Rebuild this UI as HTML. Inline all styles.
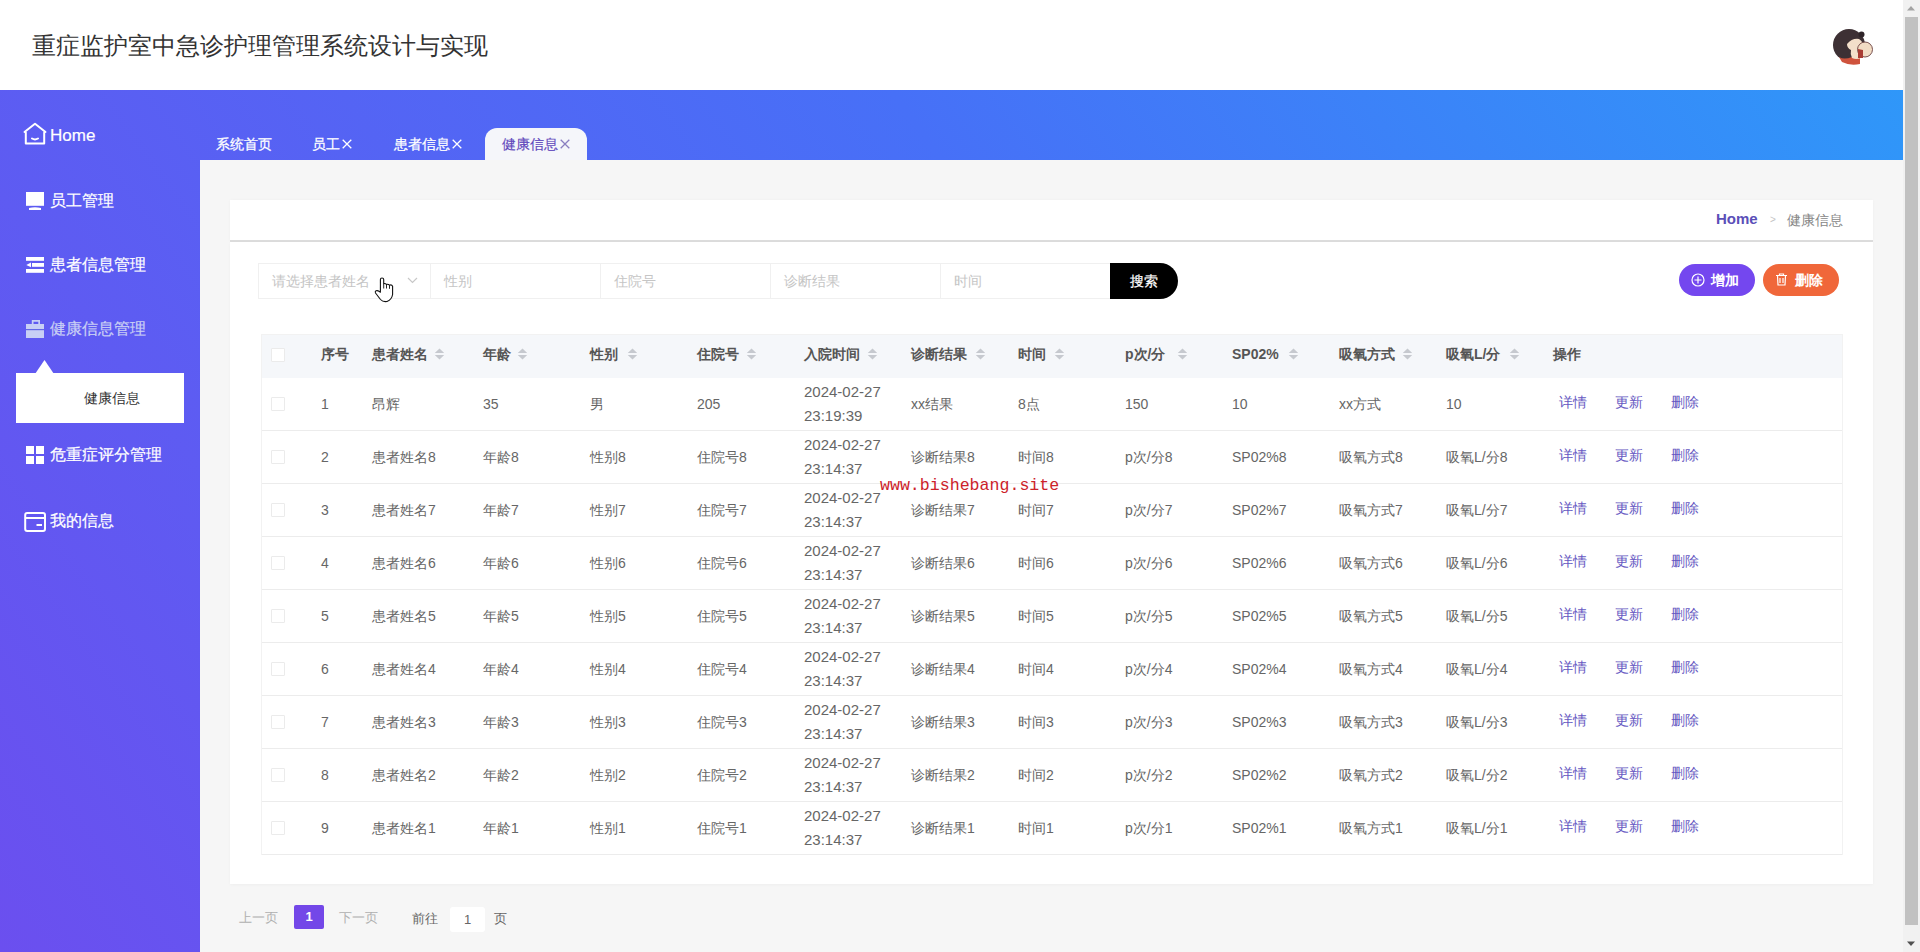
<!DOCTYPE html>
<html><head><meta charset="utf-8">
<style>
*{box-sizing:border-box;margin:0;padding:0}
html,body{width:1920px;height:952px;overflow:hidden;background:#fff;font-family:"Liberation Sans",sans-serif}
.abs{position:absolute}
#header{position:absolute;left:0;top:0;width:1903px;height:90px;background:#fff}
#title{position:absolute;left:32px;top:29px;font-size:24px;line-height:32px;color:#333;white-space:nowrap}
#grad{position:absolute;left:0;top:90px;width:1903px;height:862px;background:linear-gradient(54deg,#6b4fef 0%,#4770f7 60%,#2f97f9 100%)}
#content{position:absolute;left:200px;top:160px;width:1703px;height:792px;background:#f6f6f6}
.menu{position:absolute;left:50px;color:#fff;font-size:16px;line-height:20px;white-space:nowrap;-webkit-text-stroke:0.2px currentColor}
.micon{position:absolute}
.tab{position:absolute;top:135px;font-size:14px;line-height:18px;color:#fff;white-space:nowrap;-webkit-text-stroke:0.25px currentColor}
#sb{position:absolute;left:1903px;top:0;width:17px;height:952px;background:#f1f1f1}
#thumb{position:absolute;left:1905px;top:17px;width:13px;height:908px;background:#c1c1c1}
.card{position:absolute;background:#fff}
.inp{position:absolute;top:263px;height:36px;border:1px solid #f0f0f0;border-right:none;background:#fff;font-size:14px;color:#c5c5c5;line-height:34px;padding-left:13px;white-space:nowrap}
.btn{position:absolute;top:264px;height:32px;border-radius:16px;color:#fff;font-size:14px;font-weight:bold;line-height:32px;white-space:nowrap}
.th,.td{position:absolute;white-space:nowrap;font-size:14px}
.th{color:#555;font-weight:bold;top:345px;line-height:18px}
.td{color:#666}
.sort{position:absolute;width:10px;height:12px}
.hline{position:absolute;left:262px;width:1580px;height:1px;background:#ececec}
.cb{position:absolute;width:14px;height:14px;border:1px solid #ebebeb;border-radius:1px;background:#fff}
.op{position:absolute;font-size:14px;color:#6658c2;white-space:nowrap}
</style></head><body>
<div id="header">
  <div id="title" style="top:30px">重症监护室中急诊护理管理系统设计与实现</div>
  <svg class="abs" style="left:1828px;top:22px" width="50" height="50" viewBox="0 0 50 50">
    <circle cx="21" cy="23" r="16" fill="#3d3034"/>
    <circle cx="33.5" cy="12.5" r="3" fill="#2e2428"/>
    <path d="M11 35 Q16 38 24 35 L32 35 L32 42 Q22 44 14 40Z" fill="#cf533d"/>
    <path d="M19 22 Q24 16 31 17 Q36 20 35 26 L33 36 Q28 38 24 36 Q22 32 23 28 Q19 26 19 22Z" fill="#f3dfca"/>
    <circle cx="37" cy="27.5" r="7.5" fill="#f2dcc4" stroke="#6a4040" stroke-width="0.9"/>
    <path d="M30 27 L35 28 L35 36 L30 36Z" fill="#a93c33"/>
  </svg>
</div>
<div id="grad"></div>
<div id="content"></div>

<!-- sidebar -->
<svg class="micon" style="left:23px;top:122px" width="24" height="24" viewBox="0 0 24 24" fill="none" stroke="#fff" stroke-width="2" stroke-linejoin="round" stroke-linecap="round">
  <path d="M1.5 10 L12 1.8 L22.5 10"/><path d="M2.8 10.5 V21.5 H21.2 V10.5"/><path d="M9 16.5 Q12 18.3 15 16.5"/>
</svg>
<div class="menu" style="top:126px;font-size:17px;line-height:20px;-webkit-text-stroke:0.2px #fff">Home</div>

<svg class="micon" style="left:26px;top:192px" width="18" height="19" viewBox="0 0 18 19">
  <rect x="0" y="0" width="18" height="13.8" fill="#fff"/><path d="M3 16 Q9 14.5 15 16 V18 H3Z" fill="#fff"/>
</svg>
<div class="menu" style="top:191px">员工管理</div>

<svg class="micon" style="left:26px;top:257px" width="18" height="16" viewBox="0 0 18 16">
  <rect x="0" y="0" width="18" height="3.8" fill="#fff"/><rect x="6" y="6" width="12" height="3.8" fill="#fff"/><rect x="0" y="12" width="18" height="3.8" fill="#fff"/><path d="M0.3 7.9 L5 5.6 V10.2Z" fill="#fff"/>
</svg>
<div class="menu" style="top:255px">患者信息管理</div>

<svg class="micon" style="left:26px;top:320px" width="18" height="18" viewBox="0 0 18 18">
  <path d="M5.8 0 H14 V4 H18 V18 H0 V4 H5.8Z M7.5 1.8 V4 H12.3 V1.8Z" fill="#c8cff5" fill-rule="evenodd"/><rect x="0" y="9" width="18" height="1.2" fill="#6468e6"/>
</svg>
<div class="menu" style="top:319px;color:#c9cff5">健康信息管理</div>

<div class="abs" style="left:16px;top:373px;width:168px;height:50px;background:#fff"></div>
<svg class="abs" style="left:35px;top:360px" width="19" height="14" viewBox="0 0 19 14"><path d="M0 14 L9.5 0 L19 14Z" fill="#fff"/></svg>
<div class="abs" style="left:84px;top:389px;font-size:14px;line-height:18px;color:#333;white-space:nowrap">健康信息</div>

<svg class="micon" style="left:26px;top:446px" width="18" height="18" viewBox="0 0 18 18">
  <rect x="0" y="0" width="8" height="8" fill="#fff"/><rect x="10" y="0" width="8" height="8" fill="#fff"/><rect x="0" y="10" width="8" height="8" fill="#fff"/><rect x="10" y="10" width="8" height="8" fill="#fff"/>
</svg>
<div class="menu" style="top:445px">危重症评分管理</div>

<svg class="micon" style="left:24px;top:512px" width="22" height="20" viewBox="0 0 22 20" fill="none" stroke="#fff" stroke-width="2">
  <rect x="1.2" y="1" width="19.8" height="18" rx="2"/><line x1="1" y1="6" x2="21" y2="6"/><line x1="12.5" y1="13" x2="18" y2="13"/>
</svg>
<div class="menu" style="top:511px">我的信息</div>

<!-- tabs -->
<div class="tab" style="left:216px">系统首页</div>
<div class="tab" style="left:312px">员工<svg width="10" height="10" viewBox="0 0 10 10" style="margin-left:2px;vertical-align:0px"><path d="M0.7 0.7 L9.3 9.3 M9.3 0.7 L0.7 9.3" stroke="#fff" stroke-width="1.3"/></svg></div>
<div class="tab" style="left:394px">患者信息<svg width="10" height="10" viewBox="0 0 10 10" style="margin-left:2px;vertical-align:0px"><path d="M0.7 0.7 L9.3 9.3 M9.3 0.7 L0.7 9.3" stroke="#fff" stroke-width="1.3"/></svg></div>
<div class="abs" style="left:485px;top:128px;width:102px;height:32px;background:#f5f6fa;border-radius:12px 12px 0 0"></div>
<div class="tab" style="left:502px;color:#6249bd;-webkit-text-stroke:0.15px #6249bd">健康信息<svg width="10" height="10" viewBox="0 0 10 10" style="margin-left:2px;vertical-align:0px"><path d="M0.7 0.7 L9.3 9.3 M9.3 0.7 L0.7 9.3" stroke="#8a7fc0" stroke-width="1.3"/></svg></div>

<!-- breadcrumb card -->
<div class="card" style="box-shadow:0 0 3px rgba(0,0,0,0.03);left:230px;top:200px;width:1643px;height:42px;border-bottom:2px solid #dcdcdc"></div>
<div class="abs" style="left:1716px;top:210px;font-size:15px;line-height:18px;font-weight:bold;color:#5b4fb8">Home</div>
<div class="abs" style="left:1770px;top:211px;font-size:10px;line-height:18px;color:#c4c4c4">&gt;</div>
<div class="abs" style="left:1787px;top:211px;font-size:14px;line-height:18px;color:#888">健康信息</div>

<!-- main card -->
<div class="card" style="box-shadow:0 1px 3px rgba(0,0,0,0.03);left:230px;top:242px;width:1643px;height:642px"></div>

<div class="inp" style="left:258px;width:172px">请选择患者姓名</div>
<svg class="abs" style="left:407px;top:277px" width="11" height="7" viewBox="0 0 11 7"><path d="M1 1 L5.5 5.5 L10 1" fill="none" stroke="#c8c8c8" stroke-width="1.2"/></svg>
<div class="inp" style="left:430px;width:170px">性别</div>
<div class="inp" style="left:600px;width:170px">住院号</div>
<div class="inp" style="left:770px;width:170px">诊断结果</div>
<div class="inp" style="left:940px;width:170px">时间</div>
<div class="abs" style="left:1110px;top:263px;width:68px;height:36px;background:#000;border-radius:0 18px 18px 0;color:#fff;font-size:14px;line-height:36px;padding-left:20px;-webkit-text-stroke:0.2px #fff">搜索</div>

<div class="btn" style="left:1679px;width:76px;background:#7447ef;padding-left:32px">增加</div>
<svg class="abs" style="left:1691px;top:273px" width="14" height="14" viewBox="0 0 14 14" fill="none" stroke="#fff" stroke-width="1.2"><circle cx="7" cy="7" r="6"/><path d="M7 3.5 V10.5 M3.5 7 H10.5"/></svg>
<div class="btn" style="left:1763px;width:76px;background:#f0673a;padding-left:32px">删除</div>
<svg class="abs" style="left:1775px;top:273px" width="13" height="13" viewBox="0 0 13 13" fill="none" stroke="#fff" stroke-width="1.2"><path d="M1 2.5 H12 M4.5 2.5 V1 H8.5 V2.5 M2.5 2.5 L3 12 H10 L10.5 2.5 M5 5 V10 M8 5 V10"/></svg>

<!-- table -->
<div class="abs" style="left:261px;top:334px;width:1582px;height:521px;border:1px solid #f2f2f2;background:#fff"></div>
<div class="abs" style="left:262px;top:335px;width:1580px;height:43px;background:#f5f7fa"></div>
<div class="cb" style="left:271px;top:348px"></div>
<div class="th" style="left:321px">序号</div>
<div class="th" style="left:372px">患者姓名</div>
<div class="th" style="left:483px">年龄</div>
<div class="th" style="left:590px">性别</div>
<div class="th" style="left:697px">住院号</div>
<div class="th" style="left:804px">入院时间</div>
<div class="th" style="left:911px">诊断结果</div>
<div class="th" style="left:1018px">时间</div>
<div class="th" style="left:1125px">p次/分</div>
<div class="th" style="left:1232px">SP02%</div>
<div class="th" style="left:1339px">吸氧方式</div>
<div class="th" style="left:1446px">吸氧L/分</div>
<div class="th" style="left:1553px">操作</div>
<svg class="sort" style="left:434px;top:348px;width:11px;height:12px" viewBox="0 0 11 12"><path d="M0.8 5 L5.5 0.6 L10.2 5Z M0.8 7 L5.5 11.4 L10.2 7Z" fill="#c6c9cf"/></svg>
<svg class="sort" style="left:517px;top:348px;width:11px;height:12px" viewBox="0 0 11 12"><path d="M0.8 5 L5.5 0.6 L10.2 5Z M0.8 7 L5.5 11.4 L10.2 7Z" fill="#c6c9cf"/></svg>
<svg class="sort" style="left:627px;top:348px;width:11px;height:12px" viewBox="0 0 11 12"><path d="M0.8 5 L5.5 0.6 L10.2 5Z M0.8 7 L5.5 11.4 L10.2 7Z" fill="#c6c9cf"/></svg>
<svg class="sort" style="left:746px;top:348px;width:11px;height:12px" viewBox="0 0 11 12"><path d="M0.8 5 L5.5 0.6 L10.2 5Z M0.8 7 L5.5 11.4 L10.2 7Z" fill="#c6c9cf"/></svg>
<svg class="sort" style="left:867px;top:348px;width:11px;height:12px" viewBox="0 0 11 12"><path d="M0.8 5 L5.5 0.6 L10.2 5Z M0.8 7 L5.5 11.4 L10.2 7Z" fill="#c6c9cf"/></svg>
<svg class="sort" style="left:975px;top:348px;width:11px;height:12px" viewBox="0 0 11 12"><path d="M0.8 5 L5.5 0.6 L10.2 5Z M0.8 7 L5.5 11.4 L10.2 7Z" fill="#c6c9cf"/></svg>
<svg class="sort" style="left:1054px;top:348px;width:11px;height:12px" viewBox="0 0 11 12"><path d="M0.8 5 L5.5 0.6 L10.2 5Z M0.8 7 L5.5 11.4 L10.2 7Z" fill="#c6c9cf"/></svg>
<svg class="sort" style="left:1177px;top:348px;width:11px;height:12px" viewBox="0 0 11 12"><path d="M0.8 5 L5.5 0.6 L10.2 5Z M0.8 7 L5.5 11.4 L10.2 7Z" fill="#c6c9cf"/></svg>
<svg class="sort" style="left:1288px;top:348px;width:11px;height:12px" viewBox="0 0 11 12"><path d="M0.8 5 L5.5 0.6 L10.2 5Z M0.8 7 L5.5 11.4 L10.2 7Z" fill="#c6c9cf"/></svg>
<svg class="sort" style="left:1402px;top:348px;width:11px;height:12px" viewBox="0 0 11 12"><path d="M0.8 5 L5.5 0.6 L10.2 5Z M0.8 7 L5.5 11.4 L10.2 7Z" fill="#c6c9cf"/></svg>
<svg class="sort" style="left:1509px;top:348px;width:11px;height:12px" viewBox="0 0 11 12"><path d="M0.8 5 L5.5 0.6 L10.2 5Z M0.8 7 L5.5 11.4 L10.2 7Z" fill="#c6c9cf"/></svg>

<div class="cb" style="left:271px;top:397px"></div>
<div class="td" style="left:321px;top:394px;line-height:20px">1</div>
<div class="td" style="left:372px;top:394px;line-height:20px">昂辉</div>
<div class="td" style="left:483px;top:394px;line-height:20px">35</div>
<div class="td" style="left:590px;top:394px;line-height:20px">男</div>
<div class="td" style="left:697px;top:394px;line-height:20px">205</div>
<div class="td" style="left:804px;top:380px;line-height:24px;font-size:15px">2024-02-27<br>23:19:39</div>
<div class="td" style="left:911px;top:394px;line-height:20px">xx结果</div>
<div class="td" style="left:1018px;top:394px;line-height:20px">8点</div>
<div class="td" style="left:1125px;top:394px;line-height:20px">150</div>
<div class="td" style="left:1232px;top:394px;line-height:20px">10</div>
<div class="td" style="left:1339px;top:394px;line-height:20px">xx方式</div>
<div class="td" style="left:1446px;top:394px;line-height:20px">10</div>
<div class="op" style="left:1559px;top:392px;line-height:20px">详情</div>
<div class="op" style="left:1615px;top:392px;line-height:20px">更新</div>
<div class="op" style="left:1671px;top:392px;line-height:20px">删除</div>
<div class="hline" style="top:430px"></div>
<div class="cb" style="left:271px;top:450px"></div>
<div class="td" style="left:321px;top:447px;line-height:20px">2</div>
<div class="td" style="left:372px;top:447px;line-height:20px">患者姓名8</div>
<div class="td" style="left:483px;top:447px;line-height:20px">年龄8</div>
<div class="td" style="left:590px;top:447px;line-height:20px">性别8</div>
<div class="td" style="left:697px;top:447px;line-height:20px">住院号8</div>
<div class="td" style="left:804px;top:433px;line-height:24px;font-size:15px">2024-02-27<br>23:14:37</div>
<div class="td" style="left:911px;top:447px;line-height:20px">诊断结果8</div>
<div class="td" style="left:1018px;top:447px;line-height:20px">时间8</div>
<div class="td" style="left:1125px;top:447px;line-height:20px">p次/分8</div>
<div class="td" style="left:1232px;top:447px;line-height:20px">SP02%8</div>
<div class="td" style="left:1339px;top:447px;line-height:20px">吸氧方式8</div>
<div class="td" style="left:1446px;top:447px;line-height:20px">吸氧L/分8</div>
<div class="op" style="left:1559px;top:445px;line-height:20px">详情</div>
<div class="op" style="left:1615px;top:445px;line-height:20px">更新</div>
<div class="op" style="left:1671px;top:445px;line-height:20px">删除</div>
<div class="hline" style="top:483px"></div>
<div class="cb" style="left:271px;top:503px"></div>
<div class="td" style="left:321px;top:500px;line-height:20px">3</div>
<div class="td" style="left:372px;top:500px;line-height:20px">患者姓名7</div>
<div class="td" style="left:483px;top:500px;line-height:20px">年龄7</div>
<div class="td" style="left:590px;top:500px;line-height:20px">性别7</div>
<div class="td" style="left:697px;top:500px;line-height:20px">住院号7</div>
<div class="td" style="left:804px;top:486px;line-height:24px;font-size:15px">2024-02-27<br>23:14:37</div>
<div class="td" style="left:911px;top:500px;line-height:20px">诊断结果7</div>
<div class="td" style="left:1018px;top:500px;line-height:20px">时间7</div>
<div class="td" style="left:1125px;top:500px;line-height:20px">p次/分7</div>
<div class="td" style="left:1232px;top:500px;line-height:20px">SP02%7</div>
<div class="td" style="left:1339px;top:500px;line-height:20px">吸氧方式7</div>
<div class="td" style="left:1446px;top:500px;line-height:20px">吸氧L/分7</div>
<div class="op" style="left:1559px;top:498px;line-height:20px">详情</div>
<div class="op" style="left:1615px;top:498px;line-height:20px">更新</div>
<div class="op" style="left:1671px;top:498px;line-height:20px">删除</div>
<div class="hline" style="top:536px"></div>
<div class="cb" style="left:271px;top:556px"></div>
<div class="td" style="left:321px;top:553px;line-height:20px">4</div>
<div class="td" style="left:372px;top:553px;line-height:20px">患者姓名6</div>
<div class="td" style="left:483px;top:553px;line-height:20px">年龄6</div>
<div class="td" style="left:590px;top:553px;line-height:20px">性别6</div>
<div class="td" style="left:697px;top:553px;line-height:20px">住院号6</div>
<div class="td" style="left:804px;top:539px;line-height:24px;font-size:15px">2024-02-27<br>23:14:37</div>
<div class="td" style="left:911px;top:553px;line-height:20px">诊断结果6</div>
<div class="td" style="left:1018px;top:553px;line-height:20px">时间6</div>
<div class="td" style="left:1125px;top:553px;line-height:20px">p次/分6</div>
<div class="td" style="left:1232px;top:553px;line-height:20px">SP02%6</div>
<div class="td" style="left:1339px;top:553px;line-height:20px">吸氧方式6</div>
<div class="td" style="left:1446px;top:553px;line-height:20px">吸氧L/分6</div>
<div class="op" style="left:1559px;top:551px;line-height:20px">详情</div>
<div class="op" style="left:1615px;top:551px;line-height:20px">更新</div>
<div class="op" style="left:1671px;top:551px;line-height:20px">删除</div>
<div class="hline" style="top:589px"></div>
<div class="cb" style="left:271px;top:609px"></div>
<div class="td" style="left:321px;top:606px;line-height:20px">5</div>
<div class="td" style="left:372px;top:606px;line-height:20px">患者姓名5</div>
<div class="td" style="left:483px;top:606px;line-height:20px">年龄5</div>
<div class="td" style="left:590px;top:606px;line-height:20px">性别5</div>
<div class="td" style="left:697px;top:606px;line-height:20px">住院号5</div>
<div class="td" style="left:804px;top:592px;line-height:24px;font-size:15px">2024-02-27<br>23:14:37</div>
<div class="td" style="left:911px;top:606px;line-height:20px">诊断结果5</div>
<div class="td" style="left:1018px;top:606px;line-height:20px">时间5</div>
<div class="td" style="left:1125px;top:606px;line-height:20px">p次/分5</div>
<div class="td" style="left:1232px;top:606px;line-height:20px">SP02%5</div>
<div class="td" style="left:1339px;top:606px;line-height:20px">吸氧方式5</div>
<div class="td" style="left:1446px;top:606px;line-height:20px">吸氧L/分5</div>
<div class="op" style="left:1559px;top:604px;line-height:20px">详情</div>
<div class="op" style="left:1615px;top:604px;line-height:20px">更新</div>
<div class="op" style="left:1671px;top:604px;line-height:20px">删除</div>
<div class="hline" style="top:642px"></div>
<div class="cb" style="left:271px;top:662px"></div>
<div class="td" style="left:321px;top:659px;line-height:20px">6</div>
<div class="td" style="left:372px;top:659px;line-height:20px">患者姓名4</div>
<div class="td" style="left:483px;top:659px;line-height:20px">年龄4</div>
<div class="td" style="left:590px;top:659px;line-height:20px">性别4</div>
<div class="td" style="left:697px;top:659px;line-height:20px">住院号4</div>
<div class="td" style="left:804px;top:645px;line-height:24px;font-size:15px">2024-02-27<br>23:14:37</div>
<div class="td" style="left:911px;top:659px;line-height:20px">诊断结果4</div>
<div class="td" style="left:1018px;top:659px;line-height:20px">时间4</div>
<div class="td" style="left:1125px;top:659px;line-height:20px">p次/分4</div>
<div class="td" style="left:1232px;top:659px;line-height:20px">SP02%4</div>
<div class="td" style="left:1339px;top:659px;line-height:20px">吸氧方式4</div>
<div class="td" style="left:1446px;top:659px;line-height:20px">吸氧L/分4</div>
<div class="op" style="left:1559px;top:657px;line-height:20px">详情</div>
<div class="op" style="left:1615px;top:657px;line-height:20px">更新</div>
<div class="op" style="left:1671px;top:657px;line-height:20px">删除</div>
<div class="hline" style="top:695px"></div>
<div class="cb" style="left:271px;top:715px"></div>
<div class="td" style="left:321px;top:712px;line-height:20px">7</div>
<div class="td" style="left:372px;top:712px;line-height:20px">患者姓名3</div>
<div class="td" style="left:483px;top:712px;line-height:20px">年龄3</div>
<div class="td" style="left:590px;top:712px;line-height:20px">性别3</div>
<div class="td" style="left:697px;top:712px;line-height:20px">住院号3</div>
<div class="td" style="left:804px;top:698px;line-height:24px;font-size:15px">2024-02-27<br>23:14:37</div>
<div class="td" style="left:911px;top:712px;line-height:20px">诊断结果3</div>
<div class="td" style="left:1018px;top:712px;line-height:20px">时间3</div>
<div class="td" style="left:1125px;top:712px;line-height:20px">p次/分3</div>
<div class="td" style="left:1232px;top:712px;line-height:20px">SP02%3</div>
<div class="td" style="left:1339px;top:712px;line-height:20px">吸氧方式3</div>
<div class="td" style="left:1446px;top:712px;line-height:20px">吸氧L/分3</div>
<div class="op" style="left:1559px;top:710px;line-height:20px">详情</div>
<div class="op" style="left:1615px;top:710px;line-height:20px">更新</div>
<div class="op" style="left:1671px;top:710px;line-height:20px">删除</div>
<div class="hline" style="top:748px"></div>
<div class="cb" style="left:271px;top:768px"></div>
<div class="td" style="left:321px;top:765px;line-height:20px">8</div>
<div class="td" style="left:372px;top:765px;line-height:20px">患者姓名2</div>
<div class="td" style="left:483px;top:765px;line-height:20px">年龄2</div>
<div class="td" style="left:590px;top:765px;line-height:20px">性别2</div>
<div class="td" style="left:697px;top:765px;line-height:20px">住院号2</div>
<div class="td" style="left:804px;top:751px;line-height:24px;font-size:15px">2024-02-27<br>23:14:37</div>
<div class="td" style="left:911px;top:765px;line-height:20px">诊断结果2</div>
<div class="td" style="left:1018px;top:765px;line-height:20px">时间2</div>
<div class="td" style="left:1125px;top:765px;line-height:20px">p次/分2</div>
<div class="td" style="left:1232px;top:765px;line-height:20px">SP02%2</div>
<div class="td" style="left:1339px;top:765px;line-height:20px">吸氧方式2</div>
<div class="td" style="left:1446px;top:765px;line-height:20px">吸氧L/分2</div>
<div class="op" style="left:1559px;top:763px;line-height:20px">详情</div>
<div class="op" style="left:1615px;top:763px;line-height:20px">更新</div>
<div class="op" style="left:1671px;top:763px;line-height:20px">删除</div>
<div class="hline" style="top:801px"></div>
<div class="cb" style="left:271px;top:821px"></div>
<div class="td" style="left:321px;top:818px;line-height:20px">9</div>
<div class="td" style="left:372px;top:818px;line-height:20px">患者姓名1</div>
<div class="td" style="left:483px;top:818px;line-height:20px">年龄1</div>
<div class="td" style="left:590px;top:818px;line-height:20px">性别1</div>
<div class="td" style="left:697px;top:818px;line-height:20px">住院号1</div>
<div class="td" style="left:804px;top:804px;line-height:24px;font-size:15px">2024-02-27<br>23:14:37</div>
<div class="td" style="left:911px;top:818px;line-height:20px">诊断结果1</div>
<div class="td" style="left:1018px;top:818px;line-height:20px">时间1</div>
<div class="td" style="left:1125px;top:818px;line-height:20px">p次/分1</div>
<div class="td" style="left:1232px;top:818px;line-height:20px">SP02%1</div>
<div class="td" style="left:1339px;top:818px;line-height:20px">吸氧方式1</div>
<div class="td" style="left:1446px;top:818px;line-height:20px">吸氧L/分1</div>
<div class="op" style="left:1559px;top:816px;line-height:20px">详情</div>
<div class="op" style="left:1615px;top:816px;line-height:20px">更新</div>
<div class="op" style="left:1671px;top:816px;line-height:20px">删除</div>
<div class="hline" style="top:854px"></div>


<div class="abs" style="left:880px;top:476px;font-family:'Liberation Mono',monospace;font-size:16.6px;line-height:20px;color:#cc2229;white-space:nowrap">www.bishebang.site</div>

<!-- pagination -->
<div class="abs" style="left:239px;top:909px;font-size:13px;line-height:18px;color:#b0b0b0">上一页</div>
<div class="abs" style="left:294px;top:905px;width:30px;height:24px;background:#7347e8;border-radius:2px;color:#fff;font-weight:bold;font-size:13px;line-height:24px;text-align:center">1</div>
<div class="abs" style="left:339px;top:909px;font-size:13px;line-height:18px;color:#b0b0b0">下一页</div>
<div class="abs" style="left:412px;top:910px;font-size:13px;line-height:18px;color:#666">前往</div>
<div class="abs" style="left:450px;top:907px;width:35px;height:25px;background:#fff;border-radius:3px;color:#666;font-size:13px;line-height:25px;text-align:center">1</div>
<div class="abs" style="left:494px;top:910px;font-size:13px;line-height:18px;color:#666">页</div>

<!-- cursor -->
<svg class="abs" style="left:370px;top:272px" width="30" height="34" viewBox="0 0 30 34">
  <path d="M10.4 20 V7.6 Q10.4 6 12 6 Q13.7 6 13.7 7.6 V11.6 Q15.2 11.2 16.5 12.4 Q18 11.8 19.5 13.2 Q21.6 12.3 22.6 14.2 V22.5 Q21.8 27.5 17 29.5 Q13 30.2 10.5 27.5 L5.5 21 Q4.8 19.5 6 18.8 Q7.5 18.2 9 19.2 L10.4 20.2 Z" fill="#fff" stroke="#111" stroke-width="1.1" stroke-linejoin="round"/>
  <path d="M13.7 11.6 V16.5 M16.5 12.4 V16.5 M19.5 13.2 V16.8" stroke="#111" stroke-width="0.9"/>
</svg>

<!-- scrollbar -->
<div id="sb"></div>
<div id="thumb"></div>
<svg class="abs" style="left:1906px;top:5px" width="10" height="6" viewBox="0 0 10 6"><path d="M1 5.5 L5 1 L9 5.5Z" fill="#a3a3a3"/></svg>
<svg class="abs" style="left:1906px;top:941px" width="10" height="6" viewBox="0 0 10 6"><path d="M1 0.5 L5 5 L9 0.5Z" fill="#505050"/></svg>


</body></html>
